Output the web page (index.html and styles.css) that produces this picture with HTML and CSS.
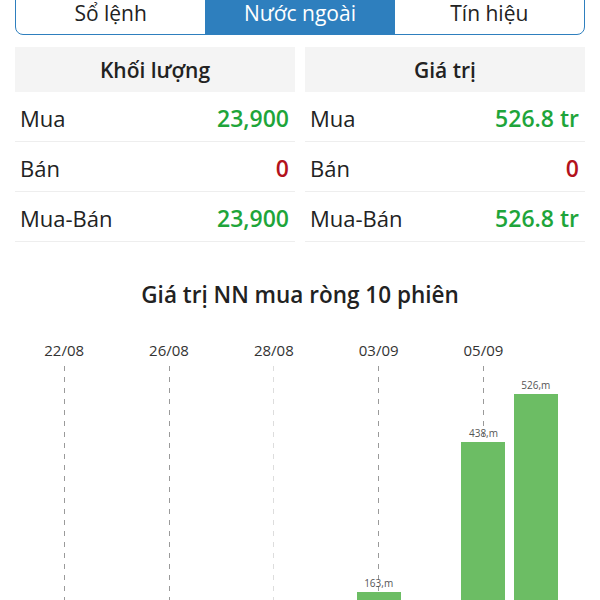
FILE: index.html
```html
<!DOCTYPE html>
<html>
<head>
<title>Nước ngoài</title>
<link rel="stylesheet" href="styles.css">
</head>
<body>

<div class="page">
    <div class="tabs">
        <div class="tab">Sổ lệnh</div>
        <div class="tab activeTab">Nước ngoài</div>
        <div class="tab">Tín hiệu</div>
    </div>

    <div class="cards">
        <div class="card">
            <div class="cardHead">Khối lượng</div>
            <div class="row"><span>Mua</span><span class="up">23,900</span></div>
            <div class="row"><span>Bán</span><span class="down">0</span></div>
            <div class="row"><span>Mua-Bán</span><span class="up">23,900</span></div>
        </div>
        <div class="card">
            <div class="cardHead">Giá trị</div>
            <div class="row"><span>Mua</span><span class="up">526.8 tr</span></div>
            <div class="row"><span>Bán</span><span class="down">0</span></div>
            <div class="row"><span>Mua-Bán</span><span class="up">526.8 tr</span></div>
        </div>
    </div>

    <div class="chartTitle">Giá trị NN mua ròng 10 phiên</div>

    <div class="chart">
        <div class="col"><div class="date">22/08</div><div class="plot gridLine"></div></div>
        <div class="col"><div class="date"></div><div class="plot"></div></div>
        <div class="col"><div class="date">26/08</div><div class="plot gridLine"></div></div>
        <div class="col"><div class="date"></div><div class="plot"></div></div>
        <div class="col"><div class="date">28/08</div><div class="plot gridLine faintLine"></div></div>
        <div class="col"><div class="date"></div><div class="plot"></div></div>
        <div class="col">
            <div class="date">03/09</div>
            <div class="plot gridLine">
                <div class="barValue">163,m</div>
                <div class="bar" style="height:89px"></div>
            </div>
        </div>
        <div class="col"><div class="date"></div><div class="plot"></div></div>
        <div class="col">
            <div class="date">05/09</div>
            <div class="plot gridLine">
                <div class="barValue">438,m</div>
                <div class="bar" style="height:239px"></div>
            </div>
        </div>
        <div class="col">
            <div class="date"></div>
            <div class="plot">
                <div class="barValue">526,m</div>
                <div class="bar" style="height:287px"></div>
            </div>
        </div>
    </div>
</div>

</body>
</html>
```

FILE: styles.css
```css
body{
    margin:0;
    font-family:"Open Sans", "Noto Sans", sans-serif;
    background:#ffffff;
    color:#222222;
    overflow:hidden;
}
.page{
    padding:0 15px;
}
.tabs{
    display:flex;
    height:45px;
    margin-top:-10px;
    border:1.5px solid #2e7fbe;
    border-radius:8px;
    overflow:hidden;
    box-sizing:border-box;
}
.tab{
    flex:1;
    display:flex;
    align-items:center;
    justify-content:center;
    font-size:21px;
    color:#222222;
}
.activeTab{
    background:#2e7fbe;
    color:#ffffff;
}
.cards{
    display:flex;
    gap:10px;
    margin-top:12px;
}
.card{
    flex:1;
}
.cardHead{
    height:45px;
    background:#f4f4f4;
    display:flex;
    align-items:center;
    justify-content:center;
    font-size:21px;
    font-weight:600;
}
.row{
    height:50px;
    box-sizing:border-box;
    display:flex;
    align-items:center;
    justify-content:space-between;
    padding:2px 6px 0 5px;
    border-bottom:1px solid #eeeeee;
    font-size:22px;
}
.up{
    color:#1ea53a;
    font-weight:600;
    font-size:23px;
}
.down{
    color:#b3121b;
    font-weight:600;
    font-size:23px;
}
.chartTitle{
    margin-top:38px;
    height:30px;
    line-height:30px;
    text-align:center;
    font-size:22.5px;
    font-weight:600;
}
.chart{
    width:524px;
    margin:28px auto 0 auto;
    display:flex;
}
.col{
    flex:1;
    display:flex;
    flex-direction:column;
    align-items:center;
}
.date{
    height:24px;
    line-height:24px;
    font-size:15px;
    color:#333333;
    margin-bottom:4px;
}
.plot{
    width:100%;
    height:315px;
    display:flex;
    flex-direction:column;
    align-items:center;
    justify-content:flex-end;
}
.gridLine{
    background-image:repeating-linear-gradient(to bottom, #9a9a9a 0 5px, transparent 5px 11px);
    background-size:1px 100%;
    background-position:center top;
    background-repeat:no-repeat;
}
.faintLine{
    background-image:repeating-linear-gradient(to bottom, #dddddd 0 5px, transparent 5px 11px);
}
.barValue{
    font-size:10px;
    line-height:12px;
    color:#555555;
    margin-bottom:3px;
}
.bar{
    width:44px;
    background:#6cbd64;
}
```
